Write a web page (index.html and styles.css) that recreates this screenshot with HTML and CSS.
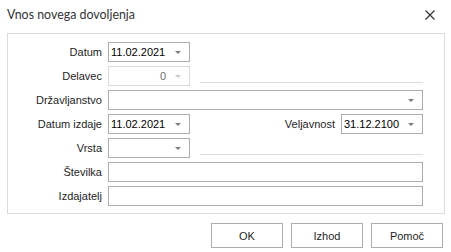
FILE: index.html
```html
<!DOCTYPE html>
<html>
<head>
<meta charset="utf-8">
<link rel="stylesheet" href="styles.css">
</head>
<body>
<div class="dialog">
  <div class="titlebar">
    <span class="title">Vnos novega dovoljenja</span>
    <svg class="close" width="10" height="10" viewBox="0 0 10 10"><path d="M0.5 0.5 L9.5 9.5 M9.5 0.5 L0.5 9.5" stroke="#333" stroke-width="1.2" fill="none"/></svg>
  </div>
  <div class="group">
    <div class="row">
      <label class="lbl">Datum</label>
      <div class="field short"><span class="val">11.02.2021</span><span class="arrow"></span></div>
    </div>
    <div class="row">
      <label class="lbl">Delavec</label>
      <div class="field short disabled"><span class="val right">0</span><span class="arrow"></span></div>
      <div class="sep"></div>
    </div>
    <div class="row">
      <label class="lbl">Državljanstvo</label>
      <div class="field wide"><span class="val"></span><span class="arrow"></span></div>
    </div>
    <div class="row">
      <label class="lbl">Datum izdaje</label>
      <div class="field short"><span class="val">11.02.2021</span><span class="arrow"></span></div>
      <label class="lbl2">Veljavnost</label>
      <div class="field short"><span class="val">31.12.2100</span><span class="arrow"></span></div>
    </div>
    <div class="row">
      <label class="lbl">Vrsta</label>
      <div class="field short"><span class="val"></span><span class="arrow"></span></div>
      <div class="sep"></div>
    </div>
    <div class="row">
      <label class="lbl">Številka</label>
      <div class="field wide"><span class="val"></span></div>
    </div>
    <div class="row">
      <label class="lbl">Izdajatelj</label>
      <div class="field wide"><span class="val"></span></div>
    </div>
  </div>
  <div class="buttons">
    <button class="btn">OK</button>
    <button class="btn">Izhod</button>
    <button class="btn">Pomoč</button>
  </div>
</div>
</body>
</html>
```

FILE: styles.css
```css
* { box-sizing: border-box; }
html, body { margin: 0; padding: 0; background: #fff; }
body {
  width: 451px;
  height: 252px;
  overflow: hidden;
  font-family: "Liberation Sans", Arial, sans-serif;
  font-size: 11px;
  color: #1e1e1e;
}
.titlebar {
  height: 33px;
  display: flex;
  align-items: center;
  justify-content: space-between;
  padding: 0 16px 0 7px;
}
.title {
  font-family: Lato, "Noto Sans", sans-serif;
  font-size: 12.4px;
  color: #333;
  margin-top: -4px;
}
.close { margin-top: -4px; }
.group {
  margin-left: 7px;
  width: 438px;
  height: 181px;
  border: 1px solid #dcdcdc;
  padding: 8px 21px 0 0;
  display: flex;
  flex-direction: column;
  gap: 4px;
}
.row {
  display: flex;
  align-items: center;
  height: 20px;
}
.lbl {
  width: 94px;
  text-align: right;
  margin-right: 6px;
  white-space: nowrap;
}
.lbl2 {
  flex: 1;
  text-align: right;
  margin-right: 6px;
}
.field {
  height: 20px;
  border: 1px solid #adadad;
  background: #fff;
  display: flex;
  align-items: center;
  padding: 0 8px 0 2px;
  color: #000;
}
.field.short { width: 82px; }
.field.wide { flex: 1; }
.field.disabled { border-color: #d9d9d9; color: #6d6d6d; }
.val { flex: 1; white-space: nowrap; }
.val.right { text-align: right; margin-right: 9px; }
.arrow {
  width: 0;
  height: 0;
  border-left: 3px solid transparent;
  border-right: 3px solid transparent;
  border-top: 3px solid #7a7a7a;
  margin-top: 1px;
}
.disabled .arrow { border-top-color: #c8c8c8; }
.sep {
  flex: 1;
  align-self: flex-end;
  height: 1px;
  background: #dedede;
  margin: 0 0 3px 10px;
}
.buttons {
  display: flex;
  justify-content: flex-end;
  gap: 8px;
  padding: 9px 8px 0 0;
}
.btn {
  width: 72px;
  height: 25px;
  border: 1px solid #adadad;
  background: #fff;
  font-family: "Liberation Sans", Arial, sans-serif;
  font-size: 11px;
  color: #1e1e1e;
  padding: 0;
}
```
